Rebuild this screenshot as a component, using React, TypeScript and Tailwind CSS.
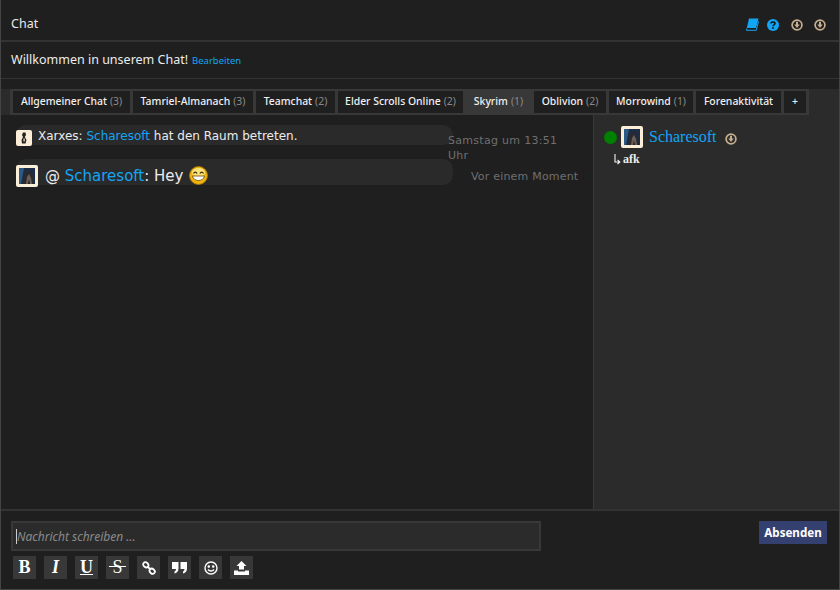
const tabs = [
  { name: "Allgemeiner Chat", count: 3, w: "w-[117px]" },
  { name: "Tamriel-Almanach", count: 3, w: "w-[120px]" },
  { name: "Teamchat", count: 2, w: "w-[79px]" },
  { name: "Elder Scrolls Online", count: 2, w: "w-[125px]" },
  { name: "Skyrim", count: 1, w: "w-[65px]", active: true },
  { name: "Oblivion", count: 2, w: "w-[72px]" },
  { name: "Morrowind", count: 1, w: "w-[84px]" },
  { name: "Forenaktivität", w: "w-[85px]" },
  { name: "+", w: "w-[22px]" },
];

const DownIcon = () => (
  <svg width="12" height="12" viewBox="0 0 12 12" className="block">
    <circle cx="6" cy="6" r="4.900" fill="none" stroke="#c4af8e" strokeWidth="1.700" />
    <path d="M5 2.800h2v2.700h1.800L6 9 3.200 5.500H5z" fill="#c4af8e" />
  </svg>
);

const Avatar = () => (
  <div className="w-[22px] h-[22px] shrink-0 border-[3px] border-[#fbeed9] rounded-[2px] overflow-hidden">
    <svg viewBox="0 0 16 16" className="w-full h-full block">
      <rect width="16" height="16" fill="#1d2b45" />
      <path d="M0 0h5L2 16H0z" fill="#2c5a86" />
      <path d="M3 16 5 8l3-6 3 2 3 5 1 7z" fill="#2a2a2e" />
      <path d="M7 16 8 9l2-3 2 4 1 6z" fill="#6a5f58" />
      <path d="M9 16l1-5 1 5z" fill="#221f20" />
    </svg>
  </div>
);

const ToolButton = ({ children }: { children: React.ReactNode }) => (
  <div className="w-[23px] h-[23px] bg-[#383838] flex items-center justify-center text-white">{children}</div>
);

export default function App() {
  return (
    <div className="w-[840px] h-[590px] bg-[#1f1f1f] border-x border-b border-[#444] flex flex-col font-['Noto_Sans',sans-serif] overflow-hidden">
      <div className="h-[31px] pt-[9px] shrink-0 flex items-center justify-between pl-[10px] pr-[13px] border-b-2 border-[#333] box-content">
        <span className="text-[12.500px] text-[#e8e8e8]">Chat</span>
        <div className="flex items-center">
          <svg width="13" height="13" viewBox="0 0 13 13" className="mr-[8px]">
            <path d="M3 .5h9.500L10 10H.8z" fill="#12a5f5" />
            <path d="M.8 10.500 .6 12.300h9.600l2.300-9" fill="none" stroke="#12a5f5" strokeWidth="1" />
          </svg>
          <svg width="12" height="12" viewBox="0 0 12 12" className="mr-[12px]">
            <circle cx="6" cy="6" r="6" fill="#12a5f5" />
            <path d="M4 4.600C4 2.600 8 2.600 8 4.600 8 6 6 5.800 6 7.200" fill="none" stroke="#111" strokeWidth="1.500" />
            <rect x="5.200" y="8.200" width="1.600" height="1.600" fill="#111" />
          </svg>
          <div className="mr-[11px] mt-[1px]"><DownIcon /></div>
          <div className="mt-[1px]"><DownIcon /></div>
        </div>
      </div>
      <div className="h-[36px] shrink-0 box-content flex items-center pl-[10px] border-b border-[#333]">
        <span className="text-[12.500px] text-[#ededed]">Willkommen in unserem Chat!</span>
        <span className="text-[9.500px] text-[#12a5f5] ml-[4px] mt-[2px]">Bearbeiten</span>
      </div>
      <div className="mt-[10px] h-[26px] shrink-0 bg-[#2b2b2b] flex pl-[9px]">
        <div className="flex gap-[3px] px-[3px] py-[2px] bg-[#383838]">
          {tabs.map((t) => (
            <div key={t.name} className={`${t.w} h-[22px] flex items-center justify-center whitespace-nowrap text-[10.400px] font-medium text-[#f0f0f0] ${t.active ? "bg-[#383838]" : "bg-[#1f1f1f]"}`}>
              {t.name}
              {t.count !== undefined && <span className="text-[#8a8a8a] font-normal ml-[3px]">({t.count})</span>}
            </div>
          ))}
        </div>
      </div>
      <div className="flex-1 min-h-0 flex">
        <div className="w-[593px] shrink-0 border-r border-[#3a3a3a] pt-[10px] pl-[15px] font-['DejaVu_Sans',sans-serif]">
          <div className="flex">
            <div className="w-[437px] h-[20px] bg-[#2a2a2a] rounded-[10px] flex items-start">
              <div className="w-[16px] h-[16px] mt-[5px] bg-[#fbeed9] rounded-[2px] flex items-center justify-center">
                <svg width="8" height="12" viewBox="0 0 8 12">
                  <path d="M3 .5h2.500L6 3 4.800 5 6.500 8 5.500 11.500H2L1.500 8 3 5 2 3z" fill="#222" />
                  <path d="M3.500 6.500h1.200v3H3.500z" fill="#fbeed9" />
                </svg>
              </div>
              <span className="text-[12px] leading-[16px] mt-[3px] text-[#ececec] ml-[6px] whitespace-nowrap">Xarxes: <span className="text-[#12a5f5]">Scharesoft</span> hat den Raum betreten.</span>
            </div>
            <div className="text-[11px] leading-[15px] text-[#6f6f6f] ml-[-5px] mt-[8px] w-[130px] tracking-[0.3px]">Samstag um 13:51 Uhr</div>
          </div>
          <div className="flex mt-[-4px]">
            <div className="w-[437px] h-[26px] bg-[#2a2a2a] rounded-[10px] flex items-start">
              <div className="mt-[6px]"><Avatar /></div>
              <span className="text-[15px] leading-[20px] mt-[7px] text-[#ececec] ml-[7px] whitespace-nowrap">@ <span className="text-[#12a5f5]">Scharesoft</span>: Hey</span>
              <svg width="19" height="19" viewBox="0 0 19 19" className="ml-[6px] mt-[7px]">
                <circle cx="9.500" cy="9.500" r="9" fill="#f0b30c" stroke="#a87c0c" strokeWidth="0.800" />
                <ellipse cx="9.500" cy="6.500" rx="6.500" ry="4.500" fill="#fbe27a" />
                <path d="M4.500 7.500c1-1.800 2.500-1.800 3.500 0M11 7.500c1-1.800 2.500-1.800 3.500 0" fill="none" stroke="#3a2c05" strokeWidth="1.300" />
                <path d="M3.500 10h12c-1 6-11 6-12 0z" fill="#fff" stroke="#6a4a05" strokeWidth="0.800" />
              </svg>
            </div>
            <div className="text-[11px] text-[#6f6f6f] ml-[18px] mt-[10px] whitespace-nowrap tracking-[0.2px]">Vor einem Moment</div>
          </div>
        </div>
        <div className="flex-1 bg-[#2b2b2b] pl-[10px] pt-[10px]">
          <div className="flex items-center">
            <div className="w-[13px] h-[13px] rounded-full bg-[#008000]" />
            <div className="ml-[4px]"><Avatar /></div>
            <span className="font-['Liberation_Serif',serif] text-[16px] text-[#12a5f5] ml-[6px]">Scharesoft</span>
            <div className="ml-[8px] mt-[3px]"><DownIcon /></div>
          </div>
          <div className="ml-[10px] mt-[3px] flex items-center text-[12px] leading-[14px] font-bold text-[#ededed] font-['Liberation_Serif',serif]">
            <svg width="7" height="11" viewBox="0 0 7 11" className="mr-[2px]">
              <path d="M1 0v8h4M3.500 5.800 5.800 8 3.500 10.200" fill="none" stroke="#f5f5f5" strokeWidth="1.100" />
            </svg>
            afk
          </div>
        </div>
      </div>
      <div className="h-[80px] shrink-0 border-t-2 border-[#333] pt-[10px] px-[10px]">
        <div className="flex justify-between items-start">
          <div className="w-[530px] h-[30px] bg-[#2b2b2b] border-2 border-[#383838] flex items-center pl-[3px] text-[12px] italic text-[#8a8a8a]">
            <span className="border-l border-[#ccc] leading-[15px]">Nachricht schreiben ...</span>
          </div>
          <div className="w-[68px] h-[23px] pt-[1px] bg-[#34406f] mr-[2px] flex items-center justify-center text-[11.600px] font-bold text-white">Absenden</div>
        </div>
        <div className="flex gap-[8px] mt-[5px] ml-[2px] font-['Liberation_Serif',serif] text-[18px] font-bold">
          <ToolButton>B</ToolButton>
          <ToolButton><span className="italic">I</span></ToolButton>
          <ToolButton><span className="underline">U</span></ToolButton>
          <ToolButton>
            <span className="relative font-normal">
              S
              <span className="absolute left-[-3px] right-[-3px] top-[12px] h-[1px] bg-white" />
            </span>
          </ToolButton>
          <ToolButton>
            <svg width="14" height="14" viewBox="0 0 14 14" fill="none" stroke="#fff" strokeWidth="1.800">
              <ellipse cx="3.800" cy="3.800" rx="2.800" ry="2.300" transform="rotate(40 3.800 3.800)" />
              <ellipse cx="10.200" cy="10.200" rx="2.800" ry="2.300" transform="rotate(40 10.200 10.200)" />
              <path d="M5.500 5.500l3 3" />
            </svg>
          </ToolButton>
          <ToolButton>
            <svg width="15" height="12" viewBox="0 0 15 12" fill="#fff">
              <path d="M0 0h6.500v6.500C6.500 9.500 4.500 11 2.500 11.500V9.500C3.500 9 4 8 4 7H0zM8.500 0H15v6.500c0 3-2 4.500-4 5V9.500c1-.5 1.500-1.500 1.500-2.500h-4z" />
            </svg>
          </ToolButton>
          <ToolButton>
            <svg width="14" height="14" viewBox="0 0 14 14" fill="none" stroke="#fff" strokeWidth="1.400">
              <circle cx="7" cy="7" r="6" />
              <circle cx="4.800" cy="5.500" r="0.600" fill="#fff" />
              <circle cx="9.200" cy="5.500" r="0.600" fill="#fff" />
              <path d="M4 8.500c1.500 2 4.500 2 6 0" />
            </svg>
          </ToolButton>
          <ToolButton>
            <svg width="15" height="14" viewBox="0 0 15 14" fill="#fff">
              <path d="M7.500 0l5 5H10v3.500H5V5H2.500z" />
              <path d="M0 9.500h4v1h7v-1h4V14H0z" />
            </svg>
          </ToolButton>
        </div>
      </div>
    </div>
  );
}
